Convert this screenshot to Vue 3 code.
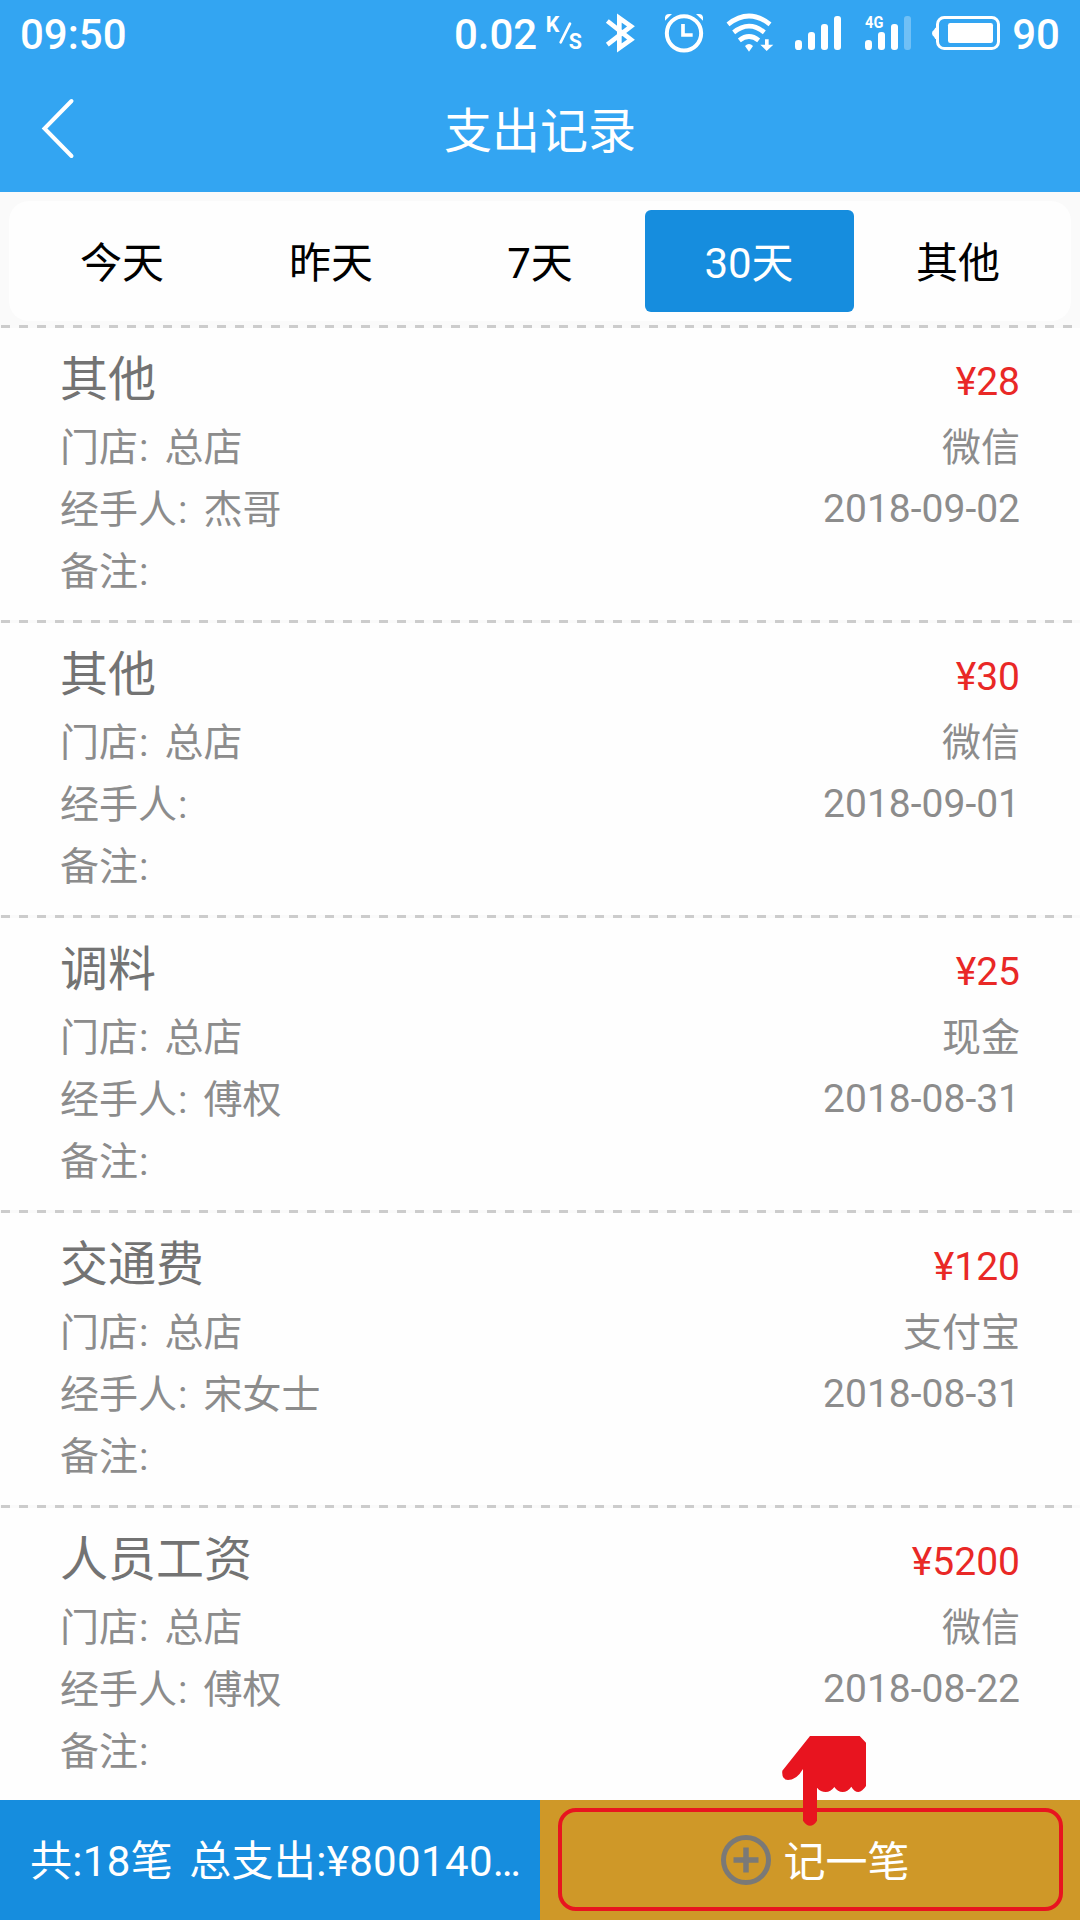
<template>
  <div class="page">
    <header>
      <div class="status-bar">
        <span class="time">09:50</span>
        <div class="status-right">
          <span class="speed">0.02</span>
          <!-- K/s -->
          <svg width="54" height="70" viewBox="318 0 162 210">
            <text x="317" y="97" class="unit">K</text>
            <path d="M390 71L362 127" stroke="#fff" stroke-width="8" stroke-linecap="round" />
            <text x="386" y="146" class="unit">S</text>
          </svg>
          <!-- bluetooth -->
          <svg width="53" height="70" viewBox="480 0 159 210">
            <path d="M502 63L573 119L538 144V54L573 79L502 134" fill="none" stroke="#fff" stroke-width="14" />
          </svg>
          <!-- alarm -->
          <svg width="67" height="70" viewBox="639 0 201 210">
            <circle cx="732" cy="100" r="51.500" fill="none" stroke="#fff" stroke-width="12" />
            <path d="M729 72V105H758" fill="none" stroke="#fff" stroke-width="11" />
            <path d="M675 62V52Q677 42 687 42H696ZM789 62V52Q787 42 777 42H768Z" fill="#fff" />
          </svg>
          <!-- wifi -->
          <svg width="63" height="70" viewBox="840 0 189 210">
            <g fill="none" stroke="#fff" stroke-width="14">
              <path d="M864 73Q927 23 990 73" />
              <path d="M881 97Q927 60 973 97" />
              <path d="M898 121Q927 98 956 121" />
            </g>
            <path d="M915 138Q927 126 939 138L927 155Z" fill="#fff" />
            <path d="M975 118H986V134H1000L980 153L961 134H975Z" fill="#fff" />
          </svg>
          <!-- signal -->
          <svg width="74" height="70" viewBox="69 0 222 210">
            <g fill="#fff">
              <rect x="105" y="120" width="21" height="30" rx="10" />
              <rect x="144" y="96" width="21" height="54" rx="9" />
              <rect x="183" y="72" width="21" height="78" rx="9" />
              <rect x="222" y="48" width="21" height="102" rx="9" />
            </g>
          </svg>
          <!-- 4G signal -->
          <svg width="67" height="70" viewBox="291 0 201 210">
            <text x="315" y="83" class="net" textLength="55" lengthAdjust="spacingAndGlyphs">4G</text>
            <g fill="#fff">
              <rect x="315" y="120" width="21" height="30" rx="10" />
              <rect x="354" y="96" width="21" height="54" rx="9" />
              <rect x="393" y="72" width="21" height="78" rx="9" />
              <rect x="432" y="48" width="21" height="102" rx="9" opacity=".3" />
            </g>
          </svg>
          <!-- battery -->
          <svg width="83" height="70" viewBox="492 0 249 210">
            <rect x="532.500" y="52.500" width="183" height="93" rx="20" fill="none" stroke="#fff" stroke-width="9" />
            <rect x="564" y="69" width="135" height="60" rx="7" fill="#fff" />
            <path d="M530 82Q525 82 522 90Q516 93 516 100Q516 107 522 110Q525 118 530 118Z" fill="#fff" />
          </svg>
          <span class="battery">90</span>
        </div>
      </div>
      <div class="nav-bar">
        <a href="#" class="back" @click.prevent>
          <svg width="40" height="70" viewBox="0 0 40 70">
            <path d="M35.500 7L8.500 34.500L35.500 62" fill="none" stroke="#fff" stroke-width="4" stroke-linecap="round" />
          </svg>
        </a>
        <h1>支出记录</h1>
      </div>
    </header>

    <div class="tabs-wrap">
      <ul class="tabs">
        <li v-for="tab in tabs" :key="tab" :class="{ active: tab === current }" @click="current = tab">{{ tab }}</li>
      </ul>
    </div>

    <ul class="records">
      <li v-for="(item, i) in records" :key="i">
        <div class="left">
          <h2>{{ item.type }}</h2>
          <p>门店<i>:</i><span>{{ item.shop }}</span></p>
          <p>经手人<i>:</i><span>{{ item.person }}</span></p>
          <p>备注<i>:</i></p>
        </div>
        <div class="right">
          <div class="amount">¥{{ item.amount }}</div>
          <p>{{ item.pay }}</p>
          <p class="date">{{ item.date }}</p>
        </div>
      </li>
    </ul>

    <footer>
      <div class="total"><span>共:18笔</span><span>总支出:¥800140…</span></div>
      <div class="add">
        <div class="add-box">
          <svg width="52" height="52" viewBox="0 0 52 52">
            <circle cx="26" cy="26" r="22.500" fill="none" stroke="#7a7977" stroke-width="5" />
            <path d="M13.500 26H38.500M26 13.500V38.500" stroke="#7a7977" stroke-width="5.500" />
          </svg>
          <span>记一笔</span>
        </div>
        <svg class="hand" width="86" height="92" viewBox="123 105 258 276">
          <path d="M210 108H359L378 128V258Q367 275 355 276Q343 276 334 260Q323 276 308 276Q293 276 283 261Q272 276 257 276Q242 276 231 263V362Q222 377 210 377Q199 377 189 362V207Q170 240 144 240Q124 239 127 212Z" fill="#e8141f" />
        </svg>
      </div>
    </footer>
  </div>
</template>

<script setup>
import { ref } from 'vue';

const tabs = ['今天', '昨天', '7天', '30天', '其他'];
const current = ref('30天');

const records = [
  { type: '其他', shop: '总店', person: '杰哥', amount: 28, pay: '微信', date: '2018-09-02' },
  { type: '其他', shop: '总店', person: '', amount: 30, pay: '微信', date: '2018-09-01' },
  { type: '调料', shop: '总店', person: '傅权', amount: 25, pay: '现金', date: '2018-08-31' },
  { type: '交通费', shop: '总店', person: '宋女士', amount: 120, pay: '支付宝', date: '2018-08-31' },
  { type: '人员工资', shop: '总店', person: '傅权', amount: 5200, pay: '微信', date: '2018-08-22' },
];
</script>

<style>
body {
  margin: 0;
}
</style>

<style scoped>
* {
  box-sizing: border-box;
}

h1, h2, p, ul {
  margin: 0;
  padding: 0;
  font-weight: 400;
}

ul {
  list-style: none;
}

.page {
  width: 1080px;
  height: 1920px;
  display: flex;
  flex-direction: column;
  overflow: hidden;
  background: #fefefe;
  font-family: Roboto, 'Noto Sans CJK SC', sans-serif;
}

header {
  height: 192px;
  flex: none;
  background: #33a5f2;
  color: #fff;
}

/* status bar */
.status-bar {
  height: 70px;
  display: flex;
  justify-content: space-between;
  padding: 0 20px;
  font-size: 42px;
  font-weight: 500;
  line-height: 69px;
}

.status-right {
  display: flex;
}

.speed {
  margin-right: 9px;
}

.battery {
  margin-left: 5px;
}

.unit {
  fill: #fff;
  font-size: 64px;
  font-weight: 700;
}

.net {
  fill: #fff;
  font-size: 48px;
  font-weight: 700;
}

/* title */
.nav-bar {
  height: 122px;
  display: flex;
  align-items: center;
  padding: 0 36px;
}

.back {
  width: 40px;
  height: 70px;
  margin-bottom: 4px;
}

h1 {
  flex: 1;
  margin-right: 40px;
  padding-top: 2px;
  text-align: center;
  font-size: 48px;
  line-height: 122px;
}

/* tabs */
.tabs-wrap {
  height: 133px;
  flex: none;
  padding: 9px 9px 4px;
  background: #fafafa;
}

.tabs {
  display: flex;
  height: 120px;
  padding: 9px 8px 9px 9px;
  border-radius: 20px;
  background: #fefefe;
}

.tabs li {
  flex: 1;
  height: 102px;
  padding-right: 1px;
  border-radius: 6px;
  text-align: center;
  font-size: 42px;
  line-height: 107px;
  color: #000;
}

.tabs .active {
  background: #168dde;
  color: #fff;
}

/* list */
.records {
  flex: 1;
  min-height: 0;
  overflow: hidden;
}

.records li {
  display: flex;
  justify-content: space-between;
  height: 295px;
  padding: 22px 60px 0;
  background: repeating-linear-gradient(90deg, #fafafa 0 1px, #ccc 1px 10px, #fafafa 10px 18px) 0 0 / 100% 3px no-repeat;
  color: #8c8c8c;
  font-size: 39px;
}

h2 {
  height: 70px;
  font-size: 48px;
  line-height: 66px;
  color: #737373;
}

p {
  height: 62px;
  line-height: 62px;
}

p i {
  margin-left: 1px;
  font-style: normal;
}

p span {
  margin-left: 16px;
}

.right {
  text-align: right;
}

.amount {
  height: 70px;
  line-height: 71px;
  color: #e92826;
}

.date {
  line-height: 61px;
}

/* footer */
footer {
  flex: none;
  display: flex;
  height: 120px;
  color: #fff;
  font-size: 42px;
}

.total {
  display: flex;
  gap: 16px;
  width: 540px;
  padding-left: 30px;
  background: #168dde;
  line-height: 124px;
  letter-spacing: .35px;
  white-space: nowrap;
}

.add {
  position: relative;
  width: 540px;
  padding: 8px 17px 9px 18px;
  background: #cf9828;
}

.add-box {
  display: flex;
  align-items: center;
  justify-content: center;
  height: 103px;
  padding-left: 9px;
  border: 4px solid #e8141f;
  border-radius: 18px;
}

.add-box span {
  margin-left: 11px;
  padding-bottom: 2px;
}

.hand {
  position: absolute;
  left: 241px;
  top: -65px;
}
</style>
